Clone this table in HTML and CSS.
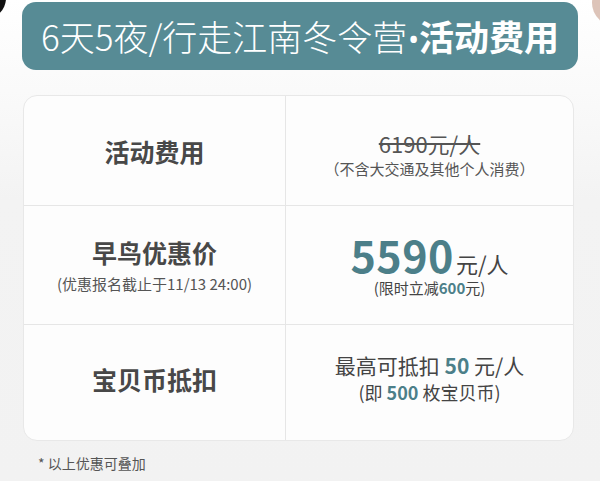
FILE: index.html
```html
<!DOCTYPE html>
<html lang="zh-CN">
<head>
<meta charset="utf-8">
<title>活动费用</title>
<link rel="stylesheet" href="styles.css">
</head>
<body>
<div class="frame">
<div class="deco deco-left"></div>
<div class="deco deco-right"></div>
<main class="page">
  <header class="banner">
    <h1 class="banner-title"><span class="light">6天5夜/行走江南冬令营</span><span class="dot">•</span><span class="strong">活动费用</span></h1>
  </header>
  <section class="card">
    <div class="cell label"><div class="label-main">活动费用</div></div>
    <div class="cell value">
      <div class="old-price">6190元/人</div>
      <div class="note">（不含大交通及其他个人消费）</div>
    </div>
    <div class="cell label">
      <div class="label-main">早鸟优惠价</div>
      <div class="label-sub">(优惠报名截止于11/13 24:00)</div>
    </div>
    <div class="cell value">
      <div class="price"><span class="big">5590</span><span class="unit">元/人</span></div>
      <div class="note2">(限时立减<b class="hl">600</b>元)</div>
    </div>
    <div class="cell label last">
      <div class="label-main">宝贝币抵扣</div>
    </div>
    <div class="cell value last">
      <div class="coin">最高可抵扣 <b class="hl">50</b> 元/人</div>
      <div class="coin-sub">(即 <b class="hl">500</b> 枚宝贝币)</div>
    </div>
  </section>
  <p class="footnote">* 以上优惠可叠加</p>
</main>
</div>
</body>
</html>
```
FILE: styles.css
```css
* { box-sizing: border-box; }
html, body { margin: 0; padding: 0; }
body {
  font-family: "Noto Sans CJK SC", "Noto Sans", sans-serif;
  color: #444;
}
.frame {
  width: 600px;
  height: 481px;
  overflow: hidden;
  position: relative;
  background: linear-gradient(to bottom, #ffffff 0px, #fafafa 90px, #f3f3f3 200px, #f2f2f2 481px);
}
.deco { position: absolute; border-radius: 50%; }
.deco-left { left: -40px; top: -24px; width: 46px; height: 44px; background: #111; }
.deco-right { right: -40px; top: -20px; width: 48px; height: 46px; background: #c79d8a; opacity: .6; }
.page { position: relative; padding: 2px 22px 0 22px; }
.banner {
  height: 68px;
  border-radius: 14px;
  background: #578b95;
  display: flex;
  align-items: center;
  justify-content: center;
}
.banner-title {
  margin: 0;
  color: #fff;
  font-size: 35px;
  line-height: 1;
  white-space: nowrap;
}
.banner-title .light { font-weight: 300; }
.banner-title .dot { font-family: "Noto Sans", sans-serif; font-weight: 700; font-size: 23px; margin: 0 1px 0 2px; position: relative; top: -3px; }
.banner-title .strong { font-weight: 700; }
.card {
  margin: 25px 4px 0 1px;
  background: #fdfdfd;
  border: 1px solid #e8e8e8;
  border-radius: 14px;
  display: grid;
  grid-template-columns: 262px 1fr;
  grid-template-rows: 110px 119px 115px;
}
.cell {
  display: flex;
  flex-direction: column;
  align-items: center;
  justify-content: center;
  text-align: center;
  border-bottom: 1px solid #e6e6e6;
}
.cell.label { border-right: 1px solid #e6e6e6; }
.cell.last { border-bottom: none; padding-bottom: 8px; }
.label-main { font-size: 25px; font-weight: 700; color: #484848; line-height: 1.2; }
.label-sub { font-size: 15px; color: #555; line-height: 1.3; margin-top: 7px; }
.value .old-price {
  font-size: 22px;
  color: #555;
  text-decoration: line-through;
  text-decoration-thickness: 1.5px;
  line-height: 1.2;
  margin-top: 8px;
}
.note { font-size: 15px; color: #555; line-height: 1.4; margin-top: 1px; }
.price { display: flex; align-items: baseline; line-height: 1; }
.big { font-size: 43px; font-weight: 700; color: #4c7f89; letter-spacing: 0.5px; }
.unit { font-size: 22px; color: #444; margin-left: 2px; }
.note2 { font-size: 15px; color: #444; line-height: 1.3; margin-top: 2px; }
.hl { color: #4c7f89; font-weight: 700; }
.coin { font-size: 21px; color: #444; line-height: 1.3; }
.coin-sub { font-size: 18px; color: #444; line-height: 1.3; margin-top: 2px; }
.footnote { margin: 12px 0 0 16px; font-size: 14px; color: #555; }
```
